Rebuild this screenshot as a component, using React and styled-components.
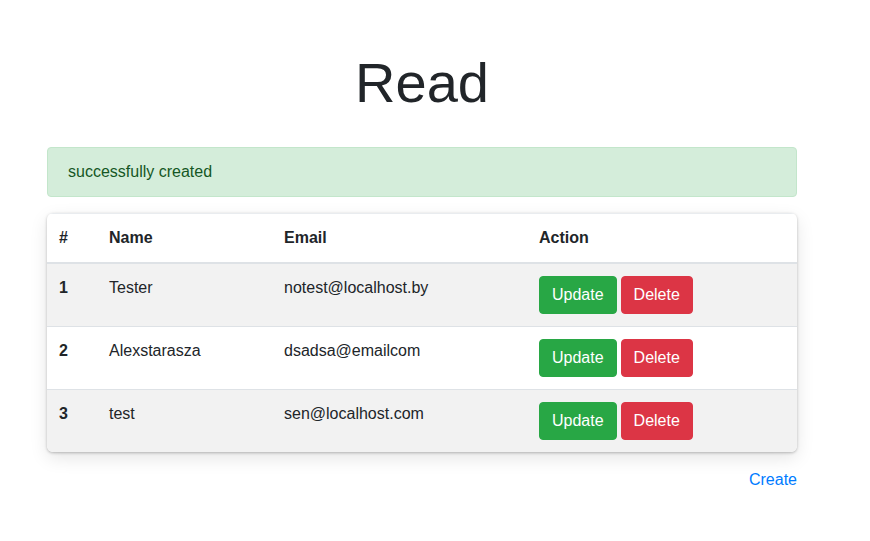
import React from "react";
import styled, { createGlobalStyle } from "styled-components";

const GlobalStyle = createGlobalStyle`
  body {
    margin: 0;
    background: #fff;
    color: #212529;
    font-family: "Liberation Sans", Arial, sans-serif;
    font-size: 16px;
    line-height: 1.5;
  }
`;

const users = [
  { id: 1, name: "Tester", email: "notest@localhost.by" },
  { id: 2, name: "Alexstarasza", email: "dsadsa@emailcom" },
  { id: 3, name: "test", email: "sen@localhost.com" },
];

const App = () => {
  return (
    <>
      <GlobalStyle />
      <Wrapper>
        <Title>Read</Title>

        <Alert>successfully created</Alert>

        {/* users table */}
        <Card>
          <Table>
            <thead>
              <tr>
                <Th $w={50}>#</Th>
                <Th $w={175}>Name</Th>
                <Th $w={255}>Email</Th>
                <Th>Action</Th>
              </tr>
            </thead>
            <tbody>
              {users.map((user, i) => (
                <Row key={user.id} $striped={i % 2 === 0}>
                  <Td $bold>{user.id}</Td>
                  <Td>{user.name}</Td>
                  <Td>{user.email}</Td>
                  <Td>
                    <Actions>
                      <Button $variant="success">Update</Button>
                      <Button $variant="danger">Delete</Button>
                    </Actions>
                  </Td>
                </Row>
              ))}
            </tbody>
          </Table>
        </Card>

        <Footer>
          <CreateLink href="#">Create</CreateLink>
        </Footer>
      </Wrapper>
    </>
  );
};

const Wrapper = styled.main`
  width: 750px;
  margin-left: 47px;
  padding-top: 49px;
`;

const Title = styled.h1`
  margin: 0 0 31px;
  text-align: center;
  font-size: 56px;
  font-weight: 400;
  line-height: 1.2;
  color: #212529;
`;

const Alert = styled.div`
  padding: 12px 20px;
  margin-bottom: 16px;
  border: 1px solid #c3e6cb;
  border-radius: 4px;
  background: #d4edda;
  color: #155724;
`;

const Card = styled.div`
  border-radius: 6px;
  overflow: hidden;
  box-shadow: 0 1px 3px rgba(0, 0, 0, 0.25), 0 6px 18px rgba(0, 0, 0, 0.1);
  margin-bottom: 16px;
`;

const Table = styled.table`
  width: 100%;
  table-layout: fixed;
  border-collapse: collapse;
  color: #212529;
`;

const Th = styled.th`
  box-sizing: border-box;
  width: ${({ $w }) => ($w ? `${$w}px` : "auto")};
  padding: 12px;
  text-align: left;
  vertical-align: bottom;
  font-weight: 700;
  border-top: 1px solid #e9ecef;
  border-bottom: 2px solid #dee2e6;
`;

const Row = styled.tr`
  background: ${({ $striped }) => ($striped ? "#f2f2f2" : "#fff")};
`;

const Td = styled.td`
  padding: 12px;
  vertical-align: top;
  font-weight: ${({ $bold }) => ($bold ? 700 : 400)};
  border-top: 1px solid #dee2e6;
`;

const Actions = styled.div`
  display: flex;
  gap: 4px;
`;

const Button = styled.button`
  padding: 6px 12px;
  border: 1px solid
    ${({ $variant }) => ($variant === "danger" ? "#dc3545" : "#28a745")};
  border-radius: 4px;
  background: ${({ $variant }) =>
    $variant === "danger" ? "#dc3545" : "#28a745"};
  color: #fff;
  font-family: inherit;
  font-size: 16px;
  line-height: 1.5;
  cursor: pointer;
`;

const Footer = styled.div`
  display: flex;
  justify-content: flex-end;
`;

const CreateLink = styled.a`
  color: #007bff;
  text-decoration: none;
`;

export default App;
